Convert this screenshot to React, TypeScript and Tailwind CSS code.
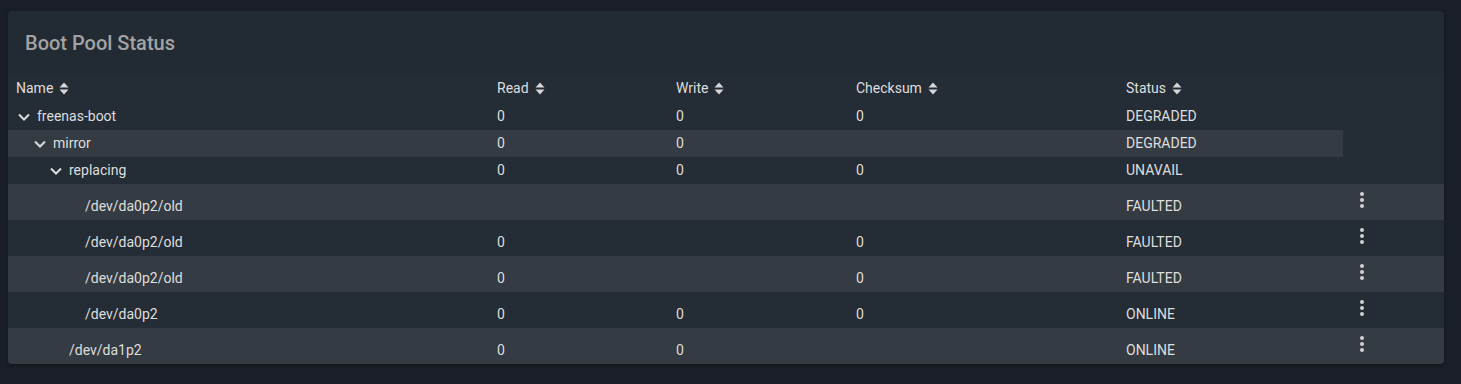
import React from "react";

type Row = {
  name: string;
  level: number;
  expandable: boolean;
  read: string;
  write: string;
  checksum: string;
  status: string;
  action: boolean;
  tall: boolean;
};

const rows: Row[] = [
  { name: "freenas-boot", level: 0, expandable: true, read: "0", write: "0", checksum: "0", status: "DEGRADED", action: false, tall: false },
  { name: "mirror", level: 1, expandable: true, read: "0", write: "0", checksum: "", status: "DEGRADED", action: false, tall: false },
  { name: "replacing", level: 2, expandable: true, read: "0", write: "0", checksum: "0", status: "UNAVAIL", action: false, tall: false },
  { name: "/dev/da0p2/old", level: 3, expandable: false, read: "", write: "", checksum: "", status: "FAULTED", action: true, tall: true },
  { name: "/dev/da0p2/old", level: 3, expandable: false, read: "0", write: "", checksum: "0", status: "FAULTED", action: true, tall: true },
  { name: "/dev/da0p2/old", level: 3, expandable: false, read: "0", write: "", checksum: "0", status: "FAULTED", action: true, tall: true },
  { name: "/dev/da0p2", level: 3, expandable: false, read: "0", write: "0", checksum: "0", status: "ONLINE", action: true, tall: true },
  { name: "/dev/da1p2", level: 2, expandable: false, read: "0", write: "0", checksum: "", status: "ONLINE", action: true, tall: true },
];

const SortIcon = () => (
  <svg width="10" height="13" viewBox="0 0 10 13" className="ml-[6px] shrink-0">
    <path d="M5 0.5 L9.5 5.5 L0.5 5.5 Z" fill="#d6d6d6" />
    <path d="M5 12.5 L9.5 7.5 L0.5 7.5 Z" fill="#d6d6d6" />
  </svg>
);

const Chevron = () => (
  <svg width="16" height="16" viewBox="0 0 16 16" className="shrink-0">
    <path d="M3 5.5 L8 10.5 L13 5.5" fill="none" stroke="#dcdcdc" strokeWidth="2" />
  </svg>
);

const Kebab = () => (
  <svg width="4" height="16" viewBox="0 0 4 16">
    <circle cx="2" cy="2" r="2" fill="#d0d0d0" />
    <circle cx="2" cy="8" r="2" fill="#d0d0d0" />
    <circle cx="2" cy="14" r="2" fill="#d0d0d0" />
  </svg>
);

const cols = "grid grid-cols-[489px_179px_180px_270px_217px_1fr]";

export default function App() {
  return (
    <div
      className="w-[1461px] h-[384px] bg-[#1a1f27] pt-[11px] pl-[8px] pr-[17px]"
      style={{ fontFamily: "Roboto, 'Liberation Sans', sans-serif" }}
    >
      <div className="w-[1436px] rounded-[4px] overflow-hidden bg-[#222a33] shadow-[0_1px_3px_rgba(0,0,0,0.4)]">
        <div className="h-[64px] flex items-center pl-[17px]">
          <span className="text-[20px] font-medium text-[#a3a3a3]">Boot Pool Status</span>
        </div>
        <div className="bg-[#242c35] text-[14px] text-[#dedede]">
          <div className={`${cols} h-[28px] items-center pb-[1px]`}>
            <div className="pl-[8px] flex items-center">Name<SortIcon /></div>
            <div className="flex items-center">Read<SortIcon /></div>
            <div className="flex items-center">Write<SortIcon /></div>
            <div className="flex items-center">Checksum<SortIcon /></div>
            <div className="flex items-center">Status<SortIcon /></div>
            <div />
          </div>
          {rows.map((r, i) => {
            const hl = i % 2 === 1;
            const cellBg = hl ? "bg-[#353b42]" : "";
            const h = r.tall ? "h-[36px]" : "h-[27px]";
            const txt = r.tall ? "pt-[9px]" : "";
            return (
              <div key={i} className={`${cols} ${h}`}>
                <div className={`${cellBg} flex items-center pl-[8px] ${txt}`}>
                  <div style={{ width: r.level * 16 }} className="shrink-0" />
                  <div className="w-[16px] shrink-0 flex items-center">
                    {r.expandable ? <Chevron /> : null}
                  </div>
                  <span className="ml-[5px]">{r.name}</span>
                </div>
                <div className={`${cellBg} flex items-center ${txt}`}>{r.read}</div>
                <div className={`${cellBg} flex items-center ${txt}`}>{r.write}</div>
                <div className={`${cellBg} flex items-center ${txt}`}>{r.checksum}</div>
                <div className={`${cellBg} flex items-center ${txt}`}>{r.status}</div>
                <div className={`${r.action ? cellBg : ""} flex items-center pb-[5px]`}>
                  {r.action ? (
                    <div className="w-[38px] flex justify-center">
                      <Kebab />
                    </div>
                  ) : null}
                </div>
              </div>
            );
          })}
        </div>
      </div>
    </div>
  );
}
